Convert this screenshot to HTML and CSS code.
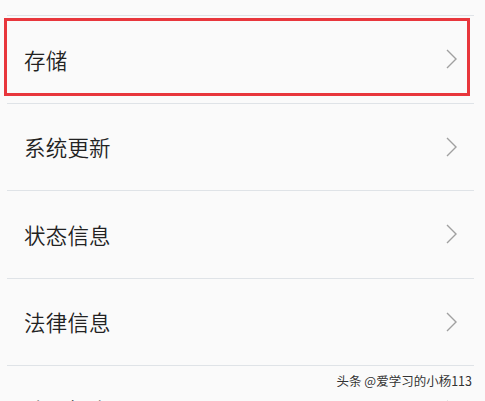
FILE: index.html
```html
<!DOCTYPE html>
<html lang="zh-CN">
<head>
<meta charset="utf-8">
<title>设置</title>
<link rel="stylesheet" href="styles.css">
</head>
<body>
<div class="page">
  <ul class="list">
    <li class="row highlighted">
      <span class="label">存储</span>
      <svg class="chev" viewBox="0 0 11 20" width="11" height="20"><path d="M1 1 L10 10 L1 19" fill="none" stroke="#a0a0a0" stroke-width="1.4"/></svg>
      <span class="mark"></span>
    </li>
    <li class="row">
      <span class="label">系统更新</span>
      <svg class="chev" viewBox="0 0 11 20" width="11" height="20"><path d="M1 1 L10 10 L1 19" fill="none" stroke="#a0a0a0" stroke-width="1.4"/></svg>
    </li>
    <li class="row">
      <span class="label">状态信息</span>
      <svg class="chev" viewBox="0 0 11 20" width="11" height="20"><path d="M1 1 L10 10 L1 19" fill="none" stroke="#a0a0a0" stroke-width="1.4"/></svg>
    </li>
    <li class="row">
      <span class="label">法律信息</span>
      <svg class="chev" viewBox="0 0 11 20" width="11" height="20"><path d="M1 1 L10 10 L1 19" fill="none" stroke="#a0a0a0" stroke-width="1.4"/></svg>
    </li>
    <li class="row">
      <span class="label">认证标志</span>
      <svg class="chev" viewBox="0 0 11 20" width="11" height="20"><path d="M1 1 L10 10 L1 19" fill="none" stroke="#a0a0a0" stroke-width="1.4"/></svg>
    </li>
  </ul>
  <div class="watermark">头条 @爱学习的小杨113</div>
</div>
</body>
</html>
```

FILE: styles.css
```css
html, body {
  margin: 0;
  padding: 0;
  background: #fafafa;
}
body {
  font-family: "Noto Sans CJK SC", "Noto Sans", sans-serif;
  color: #222;
}
.page {
  position: relative;
  width: 485px;
  height: 401px;
  overflow: hidden;
  padding-top: 15px;
  box-sizing: border-box;
}
.list {
  list-style: none;
  margin: 0;
  padding: 0;
}
.row {
  position: relative;
  display: flex;
  align-items: center;
  justify-content: space-between;
  height: 86.6px;
  margin: 0 11px 0 7px;
  padding: 0 17px;
  border-top: 1px solid #dfe3e7;
}
.label {
  font-size: 21.5px;
  font-weight: 350;
  line-height: 1;
  letter-spacing: 0.2px;
}
.chev {
  display: block;
  flex: none;
}
.mark {
  position: absolute;
  left: -3px;
  right: 4px;
  top: 2px;
  height: 78px;
  box-sizing: border-box;
  border: 3px solid #e8363c;
}
.watermark {
  position: absolute;
  right: 13px;
  top: 373px;
  font-size: 12.5px;
  line-height: 16px;
  color: #333;
  text-shadow: 0 0 2px #fff, 0 0 2px #fff;
}
```
